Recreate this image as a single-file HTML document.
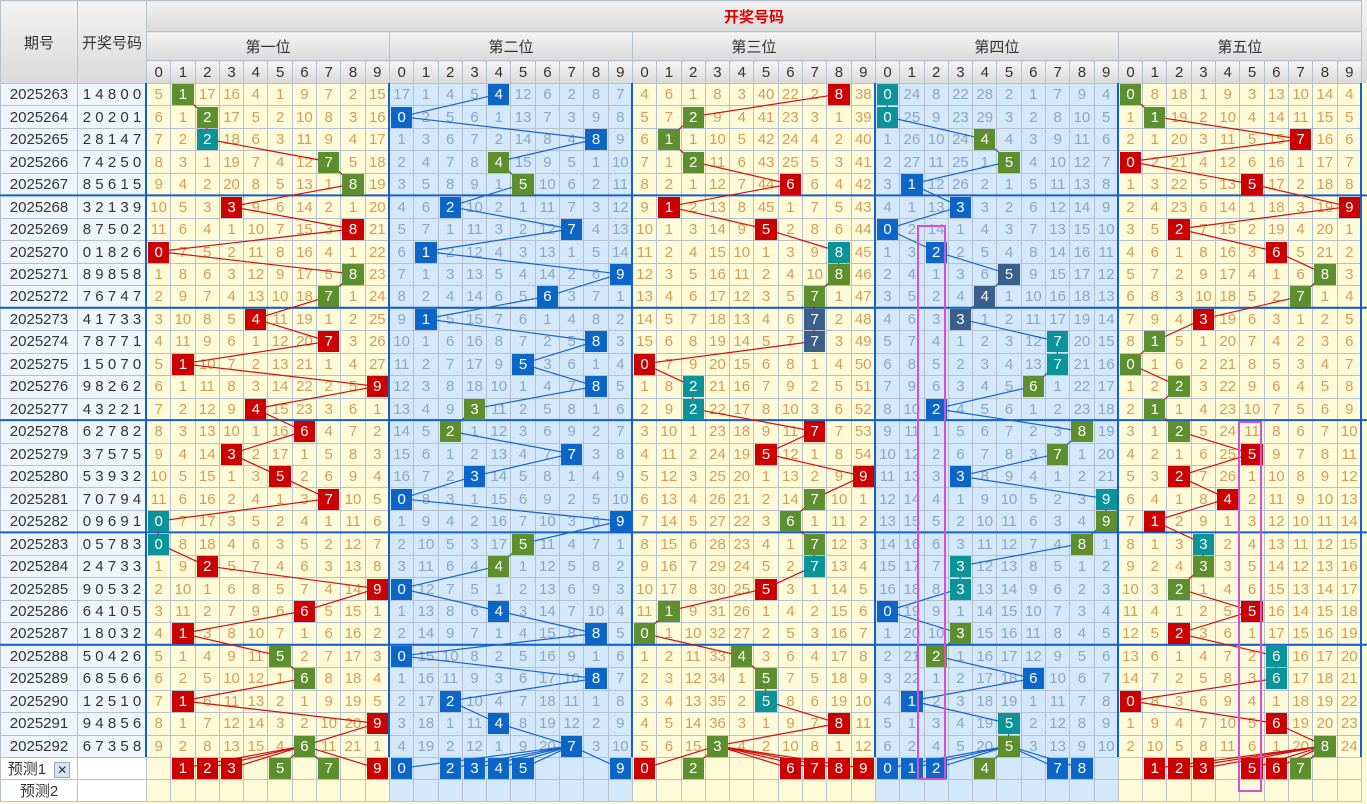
<!DOCTYPE html>
<html><head><meta charset="utf-8">
<style>
body{margin:0;width:1367px;height:804px;overflow:hidden;background:#fffad8;font-family:"Liberation Sans","Noto Sans CJK SC",sans-serif}
table{border-collapse:collapse;table-layout:fixed;width:1361px;position:absolute;left:0;top:0}
td,th{border:1px solid #b7c1cd;padding:0;text-align:center;font-size:15px;font-weight:normal;white-space:nowrap;overflow:hidden}
thead th{background:linear-gradient(#f3f3f3,#dadada);color:#333}
thead tr.a th{height:30px}
thead tr.bb th{height:28px;font-size:15px}
thead tr.c th{height:22px}
thead th.tt{color:#e00000;font-weight:bold}
tbody tr{height:22.47px}
tbody th{background:#eef5fd;color:#333;font-size:15px}
tbody td{background:#fffad8;color:#cf9f5a}
tbody td:nth-child(n+13):nth-child(-n+22),tbody td:nth-child(n+33):nth-child(-n+42){background:#d4e8fb;color:#8ea5be}
tbody tr.f{height:22px}
tbody tr.f th{background:#fff}
b{display:block;margin:0 1px;height:21px;line-height:21px;color:#fff;font-weight:normal;position:relative;z-index:2}
.g{background:#5e8f2e}.r{background:#cc0000}.b{background:#0b66c8}.t{background:#0a9398}.s{background:#3a5f8a}
svg{position:absolute;left:0;top:0;z-index:1}
svg polyline,svg path{vector-effect:non-scaling-stroke}
.pk{position:absolute;border:2px solid #d94fd0;z-index:3}
.x{display:inline-block;width:14px;height:14px;line-height:14px;font-size:12px;background:#d6e4f5;border:1px solid #8fa6c4;color:#333;vertical-align:middle;margin-left:4px}
.hd{position:absolute;left:1361px;top:0;width:6px;height:83px;background:linear-gradient(#f3f3f3,#dadada)}
</style></head><body>
<div class="hd"></div>
<table>
<colgroup><col style="width:77px"><col style="width:69px"><col span="50" style="width:24.3px"></colgroup>
<thead>
<tr class="a"><th rowspan="3">期号</th><th rowspan="3">开奖号码</th><th colspan="50" class="tt">开奖号码</th></tr>
<tr class="bb"><th colspan="10">第一位</th><th colspan="10">第二位</th><th colspan="10">第三位</th><th colspan="10">第四位</th><th colspan="10">第五位</th></tr>
<tr class="c"><th>0</th><th>1</th><th>2</th><th>3</th><th>4</th><th>5</th><th>6</th><th>7</th><th>8</th><th>9</th><th>0</th><th>1</th><th>2</th><th>3</th><th>4</th><th>5</th><th>6</th><th>7</th><th>8</th><th>9</th><th>0</th><th>1</th><th>2</th><th>3</th><th>4</th><th>5</th><th>6</th><th>7</th><th>8</th><th>9</th><th>0</th><th>1</th><th>2</th><th>3</th><th>4</th><th>5</th><th>6</th><th>7</th><th>8</th><th>9</th><th>0</th><th>1</th><th>2</th><th>3</th><th>4</th><th>5</th><th>6</th><th>7</th><th>8</th><th>9</th></tr>
</thead>
<tbody>
<tr><th>2025263<th>1 4 8 0 0<td>5<td><b class=g>1</b><td>17<td>16<td>4<td>1<td>9<td>7<td>2<td>15<td>17<td>1<td>4<td>5<td><b class=b>4</b><td>12<td>6<td>2<td>8<td>7<td>4<td>6<td>1<td>8<td>3<td>40<td>22<td>2<td><b class=r>8</b><td>38<td><b class=t>0</b><td>24<td>8<td>22<td>28<td>2<td>1<td>7<td>9<td>4<td><b class=g>0</b><td>8<td>18<td>1<td>9<td>3<td>13<td>10<td>14<td>4
<tr><th>2025264<th>2 0 2 0 1<td>6<td>1<td><b class=g>2</b><td>17<td>5<td>2<td>10<td>8<td>3<td>16<td><b class=b>0</b><td>2<td>5<td>6<td>1<td>13<td>7<td>3<td>9<td>8<td>5<td>7<td><b class=g>2</b><td>9<td>4<td>41<td>23<td>3<td>1<td>39<td><b class=t>0</b><td>25<td>9<td>23<td>29<td>3<td>2<td>8<td>10<td>5<td>1<td><b class=g>1</b><td>19<td>2<td>10<td>4<td>14<td>11<td>15<td>5
<tr><th>2025265<th>2 8 1 4 7<td>7<td>2<td><b class=t>2</b><td>18<td>6<td>3<td>11<td>9<td>4<td>17<td>1<td>3<td>6<td>7<td>2<td>14<td>8<td>4<td><b class=b>8</b><td>9<td>6<td><b class=g>1</b><td>1<td>10<td>5<td>42<td>24<td>4<td>2<td>40<td>1<td>26<td>10<td>24<td><b class=g>4</b><td>4<td>3<td>9<td>11<td>6<td>2<td>1<td>20<td>3<td>11<td>5<td>15<td><b class=r>7</b><td>16<td>6
<tr><th>2025266<th>7 4 2 5 0<td>8<td>3<td>1<td>19<td>7<td>4<td>12<td><b class=g>7</b><td>5<td>18<td>2<td>4<td>7<td>8<td><b class=g>4</b><td>15<td>9<td>5<td>1<td>10<td>7<td>1<td><b class=g>2</b><td>11<td>6<td>43<td>25<td>5<td>3<td>41<td>2<td>27<td>11<td>25<td>1<td><b class=g>5</b><td>4<td>10<td>12<td>7<td><b class=r>0</b><td>2<td>21<td>4<td>12<td>6<td>16<td>1<td>17<td>7
<tr><th>2025267<th>8 5 6 1 5<td>9<td>4<td>2<td>20<td>8<td>5<td>13<td>1<td><b class=g>8</b><td>19<td>3<td>5<td>8<td>9<td>1<td><b class=g>5</b><td>10<td>6<td>2<td>11<td>8<td>2<td>1<td>12<td>7<td>44<td><b class=r>6</b><td>6<td>4<td>42<td>3<td><b class=b>1</b><td>12<td>26<td>2<td>1<td>5<td>11<td>13<td>8<td>1<td>3<td>22<td>5<td>13<td><b class=r>5</b><td>17<td>2<td>18<td>8
<tr><th>2025268<th>3 2 1 3 9<td>10<td>5<td>3<td><b class=r>3</b><td>9<td>6<td>14<td>2<td>1<td>20<td>4<td>6<td><b class=b>2</b><td>10<td>2<td>1<td>11<td>7<td>3<td>12<td>9<td><b class=r>1</b><td>2<td>13<td>8<td>45<td>1<td>7<td>5<td>43<td>4<td>1<td>13<td><b class=b>3</b><td>3<td>2<td>6<td>12<td>14<td>9<td>2<td>4<td>23<td>6<td>14<td>1<td>18<td>3<td>19<td><b class=r>9</b>
<tr><th>2025269<th>8 7 5 0 2<td>11<td>6<td>4<td>1<td>10<td>7<td>15<td>3<td><b class=r>8</b><td>21<td>5<td>7<td>1<td>11<td>3<td>2<td>12<td><b class=b>7</b><td>4<td>13<td>10<td>1<td>3<td>14<td>9<td><b class=r>5</b><td>2<td>8<td>6<td>44<td><b class=b>0</b><td>2<td>14<td>1<td>4<td>3<td>7<td>13<td>15<td>10<td>3<td>5<td><b class=r>2</b><td>7<td>15<td>2<td>19<td>4<td>20<td>1
<tr><th>2025270<th>0 1 8 2 6<td><b class=r>0</b><td>7<td>5<td>2<td>11<td>8<td>16<td>4<td>1<td>22<td>6<td><b class=b>1</b><td>2<td>12<td>4<td>3<td>13<td>1<td>5<td>14<td>11<td>2<td>4<td>15<td>10<td>1<td>3<td>9<td><b class=t>8</b><td>45<td>1<td>3<td><b class=b>2</b><td>2<td>5<td>4<td>8<td>14<td>16<td>11<td>4<td>6<td>1<td>8<td>16<td>3<td><b class=r>6</b><td>5<td>21<td>2
<tr><th>2025271<th>8 9 8 5 8<td>1<td>8<td>6<td>3<td>12<td>9<td>17<td>5<td><b class=g>8</b><td>23<td>7<td>1<td>3<td>13<td>5<td>4<td>14<td>2<td>6<td><b class=b>9</b><td>12<td>3<td>5<td>16<td>11<td>2<td>4<td>10<td><b class=g>8</b><td>46<td>2<td>4<td>1<td>3<td>6<td><b class=s>5</b><td>9<td>15<td>17<td>12<td>5<td>7<td>2<td>9<td>17<td>4<td>1<td>6<td><b class=g>8</b><td>3
<tr><th>2025272<th>7 6 7 4 7<td>2<td>9<td>7<td>4<td>13<td>10<td>18<td><b class=g>7</b><td>1<td>24<td>8<td>2<td>4<td>14<td>6<td>5<td><b class=b>6</b><td>3<td>7<td>1<td>13<td>4<td>6<td>17<td>12<td>3<td>5<td><b class=g>7</b><td>1<td>47<td>3<td>5<td>2<td>4<td><b class=s>4</b><td>1<td>10<td>16<td>18<td>13<td>6<td>8<td>3<td>10<td>18<td>5<td>2<td><b class=g>7</b><td>1<td>4
<tr><th>2025273<th>4 1 7 3 3<td>3<td>10<td>8<td>5<td><b class=r>4</b><td>11<td>19<td>1<td>2<td>25<td>9<td><b class=b>1</b><td>5<td>15<td>7<td>6<td>1<td>4<td>8<td>2<td>14<td>5<td>7<td>18<td>13<td>4<td>6<td><b class=s>7</b><td>2<td>48<td>4<td>6<td>3<td><b class=s>3</b><td>1<td>2<td>11<td>17<td>19<td>14<td>7<td>9<td>4<td><b class=r>3</b><td>19<td>6<td>3<td>1<td>2<td>5
<tr><th>2025274<th>7 8 7 7 1<td>4<td>11<td>9<td>6<td>1<td>12<td>20<td><b class=r>7</b><td>3<td>26<td>10<td>1<td>6<td>16<td>8<td>7<td>2<td>5<td><b class=b>8</b><td>3<td>15<td>6<td>8<td>19<td>14<td>5<td>7<td><b class=s>7</b><td>3<td>49<td>5<td>7<td>4<td>1<td>2<td>3<td>12<td><b class=t>7</b><td>20<td>15<td>8<td><b class=g>1</b><td>5<td>1<td>20<td>7<td>4<td>2<td>3<td>6
<tr><th>2025275<th>1 5 0 7 0<td>5<td><b class=r>1</b><td>10<td>7<td>2<td>13<td>21<td>1<td>4<td>27<td>11<td>2<td>7<td>17<td>9<td><b class=b>5</b><td>3<td>6<td>1<td>4<td><b class=r>0</b><td>7<td>9<td>20<td>15<td>6<td>8<td>1<td>4<td>50<td>6<td>8<td>5<td>2<td>3<td>4<td>13<td><b class=t>7</b><td>21<td>16<td><b class=g>0</b><td>1<td>6<td>2<td>21<td>8<td>5<td>3<td>4<td>7
<tr><th>2025276<th>9 8 2 6 2<td>6<td>1<td>11<td>8<td>3<td>14<td>22<td>2<td>5<td><b class=r>9</b><td>12<td>3<td>8<td>18<td>10<td>1<td>4<td>7<td><b class=b>8</b><td>5<td>1<td>8<td><b class=t>2</b><td>21<td>16<td>7<td>9<td>2<td>5<td>51<td>7<td>9<td>6<td>3<td>4<td>5<td><b class=g>6</b><td>1<td>22<td>17<td>1<td>2<td><b class=g>2</b><td>3<td>22<td>9<td>6<td>4<td>5<td>8
<tr><th>2025277<th>4 3 2 2 1<td>7<td>2<td>12<td>9<td><b class=r>4</b><td>15<td>23<td>3<td>6<td>1<td>13<td>4<td>9<td><b class=g>3</b><td>11<td>2<td>5<td>8<td>1<td>6<td>2<td>9<td><b class=t>2</b><td>22<td>17<td>8<td>10<td>3<td>6<td>52<td>8<td>10<td><b class=b>2</b><td>4<td>5<td>6<td>1<td>2<td>23<td>18<td>2<td><b class=g>1</b><td>1<td>4<td>23<td>10<td>7<td>5<td>6<td>9
<tr><th>2025278<th>6 2 7 8 2<td>8<td>3<td>13<td>10<td>1<td>16<td><b class=r>6</b><td>4<td>7<td>2<td>14<td>5<td><b class=g>2</b><td>1<td>12<td>3<td>6<td>9<td>2<td>7<td>3<td>10<td>1<td>23<td>18<td>9<td>11<td><b class=r>7</b><td>7<td>53<td>9<td>11<td>1<td>5<td>6<td>7<td>2<td>3<td><b class=g>8</b><td>19<td>3<td>1<td><b class=g>2</b><td>5<td>24<td>11<td>8<td>6<td>7<td>10
<tr><th>2025279<th>3 7 5 7 5<td>9<td>4<td>14<td><b class=r>3</b><td>2<td>17<td>1<td>5<td>8<td>3<td>15<td>6<td>1<td>2<td>13<td>4<td>7<td><b class=b>7</b><td>3<td>8<td>4<td>11<td>2<td>24<td>19<td><b class=r>5</b><td>12<td>1<td>8<td>54<td>10<td>12<td>2<td>6<td>7<td>8<td>3<td><b class=g>7</b><td>1<td>20<td>4<td>2<td>1<td>6<td>25<td><b class=r>5</b><td>9<td>7<td>8<td>11
<tr><th>2025280<th>5 3 9 3 2<td>10<td>5<td>15<td>1<td>3<td><b class=r>5</b><td>2<td>6<td>9<td>4<td>16<td>7<td>2<td><b class=b>3</b><td>14<td>5<td>8<td>1<td>4<td>9<td>5<td>12<td>3<td>25<td>20<td>1<td>13<td>2<td>9<td><b class=r>9</b><td>11<td>13<td>3<td><b class=b>3</b><td>8<td>9<td>4<td>1<td>2<td>21<td>5<td>3<td><b class=r>2</b><td>7<td>26<td>1<td>10<td>8<td>9<td>12
<tr><th>2025281<th>7 0 7 9 4<td>11<td>6<td>16<td>2<td>4<td>1<td>3<td><b class=r>7</b><td>10<td>5<td><b class=b>0</b><td>8<td>3<td>1<td>15<td>6<td>9<td>2<td>5<td>10<td>6<td>13<td>4<td>26<td>21<td>2<td>14<td><b class=g>7</b><td>10<td>1<td>12<td>14<td>4<td>1<td>9<td>10<td>5<td>2<td>3<td><b class=t>9</b><td>6<td>4<td>1<td>8<td><b class=r>4</b><td>2<td>11<td>9<td>10<td>13
<tr><th>2025282<th>0 9 6 9 1<td><b class=t>0</b><td>7<td>17<td>3<td>5<td>2<td>4<td>1<td>11<td>6<td>1<td>9<td>4<td>2<td>16<td>7<td>10<td>3<td>6<td><b class=b>9</b><td>7<td>14<td>5<td>27<td>22<td>3<td><b class=g>6</b><td>1<td>11<td>2<td>13<td>15<td>5<td>2<td>10<td>11<td>6<td>3<td>4<td><b class=g>9</b><td>7<td><b class=r>1</b><td>2<td>9<td>1<td>3<td>12<td>10<td>11<td>14
<tr><th>2025283<th>0 5 7 8 3<td><b class=t>0</b><td>8<td>18<td>4<td>6<td>3<td>5<td>2<td>12<td>7<td>2<td>10<td>5<td>3<td>17<td><b class=g>5</b><td>11<td>4<td>7<td>1<td>8<td>15<td>6<td>28<td>23<td>4<td>1<td><b class=g>7</b><td>12<td>3<td>14<td>16<td>6<td>3<td>11<td>12<td>7<td>4<td><b class=g>8</b><td>1<td>8<td>1<td>3<td><b class=t>3</b><td>2<td>4<td>13<td>11<td>12<td>15
<tr><th>2025284<th>2 4 7 3 3<td>1<td>9<td><b class=r>2</b><td>5<td>7<td>4<td>6<td>3<td>13<td>8<td>3<td>11<td>6<td>4<td><b class=g>4</b><td>1<td>12<td>5<td>8<td>2<td>9<td>16<td>7<td>29<td>24<td>5<td>2<td><b class=t>7</b><td>13<td>4<td>15<td>17<td>7<td><b class=t>3</b><td>12<td>13<td>8<td>5<td>1<td>2<td>9<td>2<td>4<td><b class=g>3</b><td>3<td>5<td>14<td>12<td>13<td>16
<tr><th>2025285<th>9 0 5 3 2<td>2<td>10<td>1<td>6<td>8<td>5<td>7<td>4<td>14<td><b class=r>9</b><td><b class=b>0</b><td>12<td>7<td>5<td>1<td>2<td>13<td>6<td>9<td>3<td>10<td>17<td>8<td>30<td>25<td><b class=r>5</b><td>3<td>1<td>14<td>5<td>16<td>18<td>8<td><b class=t>3</b><td>13<td>14<td>9<td>6<td>2<td>3<td>10<td>3<td><b class=g>2</b><td>1<td>4<td>6<td>15<td>13<td>14<td>17
<tr><th>2025286<th>6 4 1 0 5<td>3<td>11<td>2<td>7<td>9<td>6<td><b class=r>6</b><td>5<td>15<td>1<td>1<td>13<td>8<td>6<td><b class=b>4</b><td>3<td>14<td>7<td>10<td>4<td>11<td><b class=g>1</b><td>9<td>31<td>26<td>1<td>4<td>2<td>15<td>6<td><b class=b>0</b><td>19<td>9<td>1<td>14<td>15<td>10<td>7<td>3<td>4<td>11<td>4<td>1<td>2<td>5<td><b class=r>5</b><td>16<td>14<td>15<td>18
<tr><th>2025287<th>1 8 0 3 2<td>4<td><b class=r>1</b><td>3<td>8<td>10<td>7<td>1<td>6<td>16<td>2<td>2<td>14<td>9<td>7<td>1<td>4<td>15<td>8<td><b class=b>8</b><td>5<td><b class=g>0</b><td>1<td>10<td>32<td>27<td>2<td>5<td>3<td>16<td>7<td>1<td>20<td>10<td><b class=g>3</b><td>15<td>16<td>11<td>8<td>4<td>5<td>12<td>5<td><b class=r>2</b><td>3<td>6<td>1<td>17<td>15<td>16<td>19
<tr><th>2025288<th>5 0 4 2 6<td>5<td>1<td>4<td>9<td>11<td><b class=g>5</b><td>2<td>7<td>17<td>3<td><b class=b>0</b><td>15<td>10<td>8<td>2<td>5<td>16<td>9<td>1<td>6<td>1<td>2<td>11<td>33<td><b class=g>4</b><td>3<td>6<td>4<td>17<td>8<td>2<td>21<td><b class=g>2</b><td>1<td>16<td>17<td>12<td>9<td>5<td>6<td>13<td>6<td>1<td>4<td>7<td>2<td><b class=t>6</b><td>16<td>17<td>20
<tr><th>2025289<th>6 8 5 6 6<td>6<td>2<td>5<td>10<td>12<td>1<td><b class=g>6</b><td>8<td>18<td>4<td>1<td>16<td>11<td>9<td>3<td>6<td>17<td>10<td><b class=b>8</b><td>7<td>2<td>3<td>12<td>34<td>1<td><b class=g>5</b><td>7<td>5<td>18<td>9<td>3<td>22<td>1<td>2<td>17<td>18<td><b class=b>6</b><td>10<td>6<td>7<td>14<td>7<td>2<td>5<td>8<td>3<td><b class=t>6</b><td>17<td>18<td>21
<tr><th>2025290<th>1 2 5 1 0<td>7<td><b class=r>1</b><td>6<td>11<td>13<td>2<td>1<td>9<td>19<td>5<td>2<td>17<td><b class=b>2</b><td>10<td>4<td>7<td>18<td>11<td>1<td>8<td>3<td>4<td>13<td>35<td>2<td><b class=t>5</b><td>8<td>6<td>19<td>10<td>4<td><b class=b>1</b><td>2<td>3<td>18<td>19<td>1<td>11<td>7<td>8<td><b class=r>0</b><td>8<td>3<td>6<td>9<td>4<td>1<td>18<td>19<td>22
<tr><th>2025291<th>9 4 8 5 6<td>8<td>1<td>7<td>12<td>14<td>3<td>2<td>10<td>20<td><b class=r>9</b><td>3<td>18<td>1<td>11<td><b class=b>4</b><td>8<td>19<td>12<td>2<td>9<td>4<td>5<td>14<td>36<td>3<td>1<td>9<td>7<td><b class=r>8</b><td>11<td>5<td>1<td>3<td>4<td>19<td><b class=t>5</b><td>2<td>12<td>8<td>9<td>1<td>9<td>4<td>7<td>10<td>5<td><b class=r>6</b><td>19<td>20<td>23
<tr><th>2025292<th>6 7 3 5 8<td>9<td>2<td>8<td>13<td>15<td>4<td><b class=g>6</b><td>11<td>21<td>1<td>4<td>19<td>2<td>12<td>1<td>9<td>20<td><b class=b>7</b><td>3<td>10<td>5<td>6<td>15<td><b class=g>3</b><td>4<td>2<td>10<td>8<td>1<td>12<td>6<td>2<td>4<td>5<td>20<td><b class=g>5</b><td>3<td>13<td>9<td>10<td>2<td>10<td>5<td>8<td>11<td>6<td>1<td>20<td><b class=g>8</b><td>24
<tr class="f"><th>预测1 <span class="x">✕</span><th><td><td><b class=r>1</b><td><b class=r>2</b><td><b class=r>3</b><td><td><b class=g>5</b><td><td><b class=g>7</b><td><td><b class=r>9</b><td><b class=b>0</b><td><td><b class=b>2</b><td><b class=b>3</b><td><b class=b>4</b><td><b class=b>5</b><td><td><td><td><b class=b>9</b><td><b class=r>0</b><td><td><b class=g>2</b><td><td><td><td><b class=r>6</b><td><b class=r>7</b><td><b class=r>8</b><td><b class=r>9</b><td><b class=b>0</b><td><b class=b>1</b><td><b class=b>2</b><td><td><b class=g>4</b><td><td><td><b class=b>7</b><td><b class=b>8</b><td><td><td><b class=r>1</b><td><b class=r>2</b><td><b class=r>3</b><td><td><b class=r>5</b><td><b class=r>6</b><td><b class=g>7</b><td><td>
<tr class="f"><th>预测2<th><td><td><td><td><td><td><td><td><td><td><td><td><td><td><td><td><td><td><td><td><td><td><td><td><td><td><td><td><td><td><td><td><td><td><td><td><td><td><td><td><td><td><td><td><td><td><td><td><td><td><td>
</tbody></table>
<svg width="1367" height="804">
<g stroke="#1560c8" stroke-width="2">
<line x1="0" y1="195.4" x2="1367" y2="195.4"/><line x1="0" y1="307.7" x2="1367" y2="307.7"/><line x1="0" y1="420.1" x2="1367" y2="420.1"/><line x1="0" y1="532.4" x2="1367" y2="532.4"/><line x1="0" y1="644.8" x2="1367" y2="644.8"/>
<line x1="146" y1="83" x2="146" y2="757"/><line x1="389" y1="83" x2="389" y2="757"/><line x1="632" y1="83" x2="632" y2="757"/><line x1="875" y1="83" x2="875" y2="757"/><line x1="1118" y1="83" x2="1118" y2="757"/><line x1="1361" y1="83" x2="1361" y2="757"/>
</g>
<g transform="translate(158.15,94.2) scale(24.3,22.47)" fill="none" stroke-width="1.2">
<polyline stroke="#d01010" points="1,0 2,1 2,2 7,3 8,4 3,5 8,6 0,7 8,8 7,9 4,10 7,11 1,12 9,13 4,14 6,15 3,16 5,17 7,18 0,19 0,20 2,21 9,22 6,23 1,24 5,25 6,26 1,27 9,28 6,29"/>
<polyline stroke="#1565c8" points="14,0 10,1 18,2 14,3 15,4 12,5 17,6 11,7 19,8 16,9 11,10 18,11 15,12 18,13 13,14 12,15 17,16 13,17 10,18 19,19 15,20 14,21 10,22 14,23 18,24 10,25 18,26 12,27 14,28 17,29"/>
<polyline stroke="#d01010" points="28,0 22,1 21,2 22,3 26,4 21,5 25,6 28,7 28,8 27,9 27,10 27,11 20,12 22,13 22,14 27,15 25,16 29,17 27,18 26,19 27,20 27,21 25,22 21,23 20,24 24,25 25,26 25,27 28,28 23,29"/>
<polyline stroke="#1565c8" points="30,0 30,1 34,2 35,3 31,4 33,5 30,6 32,7 35,8 34,9 33,10 37,11 37,12 36,13 32,14 38,15 37,16 33,17 39,18 39,19 38,20 33,21 33,22 30,23 33,24 32,25 36,26 31,27 35,28 35,29"/>
<polyline stroke="#d01010" points="40,0 41,1 47,2 40,3 45,4 49,5 42,6 46,7 48,8 47,9 43,10 41,11 40,12 42,13 41,14 42,15 45,16 42,17 44,18 41,19 43,20 43,21 42,22 45,23 42,24 46,25 46,26 40,27 46,28 48,29"/>
<path stroke="#d01010" d="M6,29L1,30M6,29L2,30M6,29L3,30M6,29L5,30M6,29L7,30M6,29L9,30"/>
<path stroke="#1565c8" d="M17,29L10,30M17,29L12,30M17,29L13,30M17,29L14,30M17,29L15,30M17,29L19,30"/>
<path stroke="#d01010" d="M23,29L20,30M23,29L22,30M23,29L26,30M23,29L27,30M23,29L28,30M23,29L29,30"/>
<path stroke="#1565c8" d="M35,29L30,30M35,29L31,30M35,29L32,30M35,29L34,30M35,29L37,30M35,29L38,30"/>
<path stroke="#d01010" d="M48,29L41,30M48,29L42,30M48,29L43,30M48,29L45,30M48,29L46,30M48,29L47,30"/>
</g>
</svg>
<div class="pk" style="left:917px;top:225px;width:25px;height:551px"></div>
<div class="pk" style="left:1238px;top:421px;width:20px;height:367px"></div>
</body></html>
